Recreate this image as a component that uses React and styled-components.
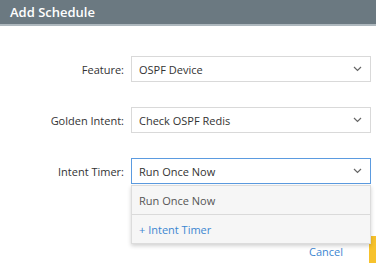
import React, { useState } from "react";
import styled, { createGlobalStyle } from "styled-components";

const Global = createGlobalStyle`
  html, body { margin: 0; padding: 0; background: #fff; }
  body { font-family: "Open Sans", "Liberation Sans", sans-serif; }
`;

const Modal = styled.div`
  width: 376px;
  height: 263px;
  overflow: hidden;
  background: #fff;
  position: relative;
`;

const Header = styled.div`
  height: 24px;
  background: #6b7981;
  border-bottom: 2px solid #aeb8be;
  color: #fff;
  font-size: 13px;
  font-weight: 600;
  display: flex;
  align-items: center;
  padding-left: 10px;
`;

const Form = styled.div`
  display: grid;
  grid-template-columns: 124px 240px;
  column-gap: 7px;
  row-gap: 25px;
  padding-top: 30px;
  align-items: center;
`;

const Label = styled.div`
  text-align: right;
  font-size: 11px;
  color: #333;
`;

const Field = styled.div`
  position: relative;
`;

const Select = styled.div`
  height: 26px;
  box-sizing: border-box;
  border: 1px solid ${(p) => (p.$open ? "#5b9be0" : "#d9d9d9")};
  background: #fff;
  display: flex;
  align-items: center;
  justify-content: space-between;
  padding: 0 8px 0 7px;
  font-size: 11px;
  color: #333;
`;

const Menu = styled.div`
  position: absolute;
  top: 27px;
  left: 0;
  right: 0;
  background: #f6f6f6;
  border: 1px solid #dcdcdc;
  box-shadow: 0 2px 4px rgba(0, 0, 0, 0.18);
  z-index: 2;
`;

const Item = styled.div`
  height: 28px;
  display: flex;
  align-items: center;
  padding-left: 7px;
  font-size: 11px;
  color: ${(p) => (p.$add ? "#3d86d1" : "#555")};
  border-top: ${(p) => (p.$add ? "1px solid #dadada" : "none")};
`;

const Footer = styled.div`
  display: flex;
  justify-content: flex-end;
  align-items: center;
  gap: 26px;
  margin-top: 52px;
  margin-right: -60px;
`;

const Cancel = styled.span`
  font-size: 11px;
  color: #3d86d1;
`;

const SaveBtn = styled.div`
  width: 67px;
  height: 30px;
  background: #f7c22c;
`;

const Chevron = () => (
  <svg width="9" height="6" viewBox="0 0 9 6">
    <path d="M1 1l3.5 3.5L8 1" fill="none" stroke="#666" strokeWidth="1.2" />
  </svg>
);

const rows = [
  { label: "Feature:", value: "OSPF Device" },
  { label: "Golden Intent:", value: "Check OSPF Redis" },
  { label: "Intent Timer:", value: "Run Once Now", open: true },
];

export default function App() {
  const [timer] = useState("Run Once Now");
  return (
    <Modal>
      <Global />
      <Header>Add Schedule</Header>
      <Form>
        {rows.map((r) => (
          <React.Fragment key={r.label}>
            <Label>{r.label}</Label>
            <Field>
              <Select $open={r.open}>
                <span>{r.open ? timer : r.value}</span>
                <Chevron />
              </Select>
              {r.open && (
                <Menu>
                  <Item>Run Once Now</Item>
                  <Item $add>+ Intent Timer</Item>
                </Menu>
              )}
            </Field>
          </React.Fragment>
        ))}
      </Form>
      <Footer>
        <Cancel>Cancel</Cancel>
        <SaveBtn />
      </Footer>
    </Modal>
  );
}
